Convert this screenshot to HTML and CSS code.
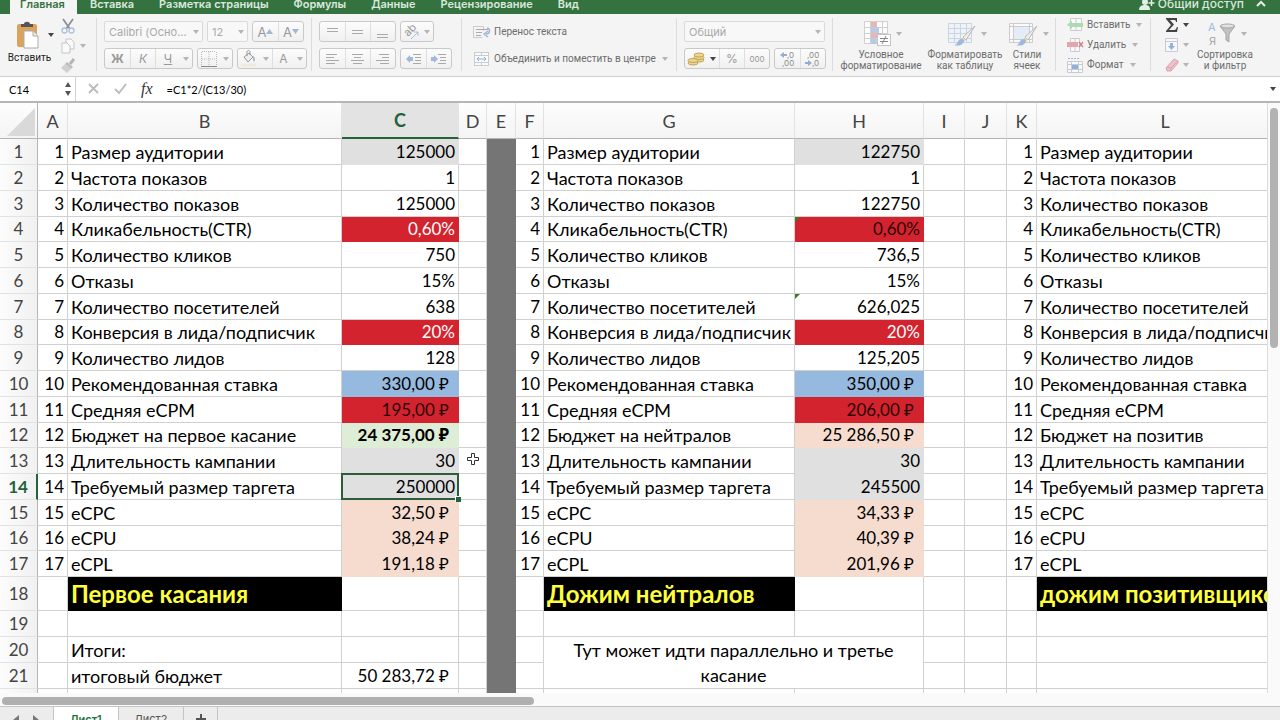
FILE: index.html
```html
<!DOCTYPE html>
<html lang="ru">
<head>
<meta charset="utf-8">
<title>Лист1</title>
<link rel="stylesheet" href="styles.css">
</head>
<body>
<nav class="tabs">
  <button class="tab tab-on">Главная</button>
  <button class="tab">Вставка</button>
  <button class="tab">Разметка страницы</button>
  <button class="tab">Формулы</button>
  <button class="tab">Данные</button>
  <button class="tab">Рецензирование</button>
  <button class="tab">Вид</button>
  <button class="tab share"><svg width="16" height="12" viewBox="0 0 16 12"><circle cx="6" cy="4" r="3" fill="#e3efe5"/><path d="M0 12c0-4 3-5 6-5s5 1 5 5z" fill="#e3efe5"/><path d="M12.500 2v6M9.500 5h6" stroke="#e3efe5" stroke-width="1.500"/></svg>Общий доступ</button>
  <button class="tab fold" aria-label="Свернуть"><svg width="10" height="12" viewBox="0 0 10 12"><path d="M1 8l4-4 4 4" fill="none" stroke="#e3efe5" stroke-width="2"/></svg></button>
</nav>

<div class="ribbon">
  <div class="group g-clip">
    <button class="big paste">
      <span class="pic"><svg width="24" height="28" viewBox="0 0 24 28"><rect x="1" y="3" width="20" height="23" rx="2" fill="#d9a35b"/><path d="M5 6V3h3c0-3 6-3 6 0h3v3z" fill="#555"/><path d="M8 10h9l5 5v12H8z" fill="#fff" stroke="#aaa"/><path d="M17 10v5h5" fill="#eee" stroke="#aaa"/></svg><i class="arrow dark"></i></span>
      <span class="dark-label">Вставить</span>
    </button>
    <div class="small-col">
      <button aria-label="Вырезать"><svg width="14" height="16" viewBox="0 0 14 16"><path d="M2 1l7 10M12 1L5 11" stroke="#8d9096" stroke-width="1.800"/><circle cx="3.500" cy="12.500" r="2.500" fill="none" stroke="#a9bfdc" stroke-width="1.300"/><circle cx="10.500" cy="12.500" r="2.500" fill="none" stroke="#a9bfdc" stroke-width="1.300"/></svg></button>
      <button aria-label="Копировать"><svg width="14" height="16" viewBox="0 0 14 16"><path d="M5 1h5l3 3v7H5z" fill="#fafafa" stroke="#c4c4c4"/><path d="M1 5h5l3 3v7H1z" fill="#fafafa" stroke="#c4c4c4"/></svg><i class="arrow"></i></button>
      <button aria-label="Формат по образцу"><svg width="15" height="15" viewBox="0 0 15 15"><path d="M13 1l-4 5" stroke="#b5b5b5" stroke-width="3"/><path d="M6 4l6 5-2 2-6-5z" fill="#b9bec5"/><path d="M4 6l6 5-4 4-6-5z" fill="#d0d0d0"/></svg></button>
    </div>
  </div>

  <div class="group g-font">
    <div class="line">
      <span class="pick w-font"><select aria-label="Шрифт" disabled><option>Calibri (Осно...</option></select><i class="arrow"></i></span>
      <span class="pick w-size"><select aria-label="Размер" disabled><option>12</option></select><i class="arrow"></i></span>
      <span class="set"><button class="b25 ltr">А<svg width="7" height="5"><path d="M0 5l3.500-5L7 5z" fill="#a3b7d2"/></svg></button><button class="b25 ltr">А<svg width="7" height="5"><path d="M0 0l3.500 5L7 0z" fill="#a3b7d2"/></svg></button></span>
    </div>
    <div class="line">
      <span class="set"><button class="b25"><b>Ж</b></button><button class="b25"><em>К</em></button><button class="b25"><u>Ч</u></button><button class="b12" aria-label="Подчеркивание"><i class="arrow"></i></button></span>
      <span class="set"><button class="b22" aria-label="Границы"><svg width="16" height="16" viewBox="0 0 16 16"><path d="M1 .5h14M.5 1v14M15.500 1v14M8 1v14M1 8h14" stroke="#b8b8b8" stroke-dasharray="1 1" fill="none"/><path d="M0 15.500h16" stroke="#888"/></svg></button><button class="b12" aria-label="Виды границ"><i class="arrow"></i></button></span>
      <span class="set"><button class="b22" aria-label="Заливка"><svg width="16" height="17" viewBox="0 0 16 17"><path d="M3 7l5-4 4 4-5 5z" fill="#eee" stroke="#9a9a9a"/><path d="M6 6V2c0-2 3-2 3 0v3" fill="none" stroke="#9a9a9a"/><path d="M12 6c3 2 2 5 1 6-1-1-1-3-1-6z" fill="#a3b7d2"/><path d="M0 15h15" stroke="#eeeadc" stroke-width="3"/></svg></button><button class="b12" aria-label="Цвет заливки"><i class="arrow"></i></button><button class="b22">A</button><button class="b12" aria-label="Цвет текста"><i class="arrow"></i></button></span>
    </div>
  </div>

  <div class="group g-align">
    <div class="line">
      <span class="set"><button class="b25" aria-label="По верхнему краю"><svg width="14" height="14"><path d="M1 3.500h11M1 6.500h11" stroke="#aaa"/></svg></button><button class="b25" aria-label="По середине"><svg width="14" height="14"><path d="M1 5.500h11M1 8.500h11" stroke="#aaa"/></svg></button><button class="b25" aria-label="По нижнему краю"><svg width="14" height="14"><path d="M1 9.500h11M1 12.500h11" stroke="#aaa"/></svg></button></span>
      <span class="set"><button class="b32" aria-label="Ориентация"><svg width="18" height="16" viewBox="0 0 18 16"><text x="0" y="0" font-size="11" fill="#999" transform="translate(4 13) rotate(-45)">ab</text><path d="M7 15l7-7M14 12V8h-4" fill="none" stroke="#a9bfdc"/></svg><i class="arrow"></i></button></span>
    </div>
    <div class="line">
      <span class="set"><button class="b25" aria-label="По левому краю"><svg width="14" height="12"><path d="M0 1.500h11M0 4.500h8M0 7.500h13M0 10.500h9" stroke="#aaa"/></svg></button><button class="b25" aria-label="По центру"><svg width="14" height="12"><path d="M1 1.500h11M3 4.500h7M0 7.500h13M2 10.500h9" stroke="#aaa"/></svg></button><button class="b25" aria-label="По правому краю"><svg width="14" height="12"><path d="M3 1.500h10M6 4.500h7M0 7.500h13M4 10.500h9" stroke="#aaa"/></svg></button></span>
      <span class="set"><button class="b25" aria-label="Уменьшить отступ"><svg width="16" height="12"><path d="M0 6l4-4v2h3v4H4v2z" fill="#a3b7d8"/><path d="M7 1.500h8M9 4.500h6M9 7.500h6M7 10.500h8" stroke="#aaa"/></svg></button><button class="b25" aria-label="Увеличить отступ"><svg width="16" height="12"><path d="M7 6L3 2v2H0v4h3v2z" fill="#a3b7d8"/><path d="M7 1.500h8M9 4.500h6M9 7.500h6M7 10.500h8" stroke="#aaa"/></svg></button></span>
    </div>
  </div>

  <div class="group g-wrap">
    <button class="flat h21"><svg width="18" height="14" viewBox="0 0 18 14"><path d="M.5 1.500h10M.5 12.500h9M.5 1v12M10.500 1v5" stroke="#ccc" fill="none"/><path d="M3 4.500h12M3 7.500h6M3 10.500h5" stroke="#aaa"/><path d="M14 3c4 1 3 6-1 6M15 6l-4 3 4 3" fill="none" stroke="#a3b7d8" stroke-width="1.500"/></svg>Перенос текста</button>
    <button class="flat h21"><svg width="18" height="16" viewBox="0 0 18 16"><rect x="1.500" y="1.500" width="14" height="13" fill="#f8fafc" stroke="#c9cdd2"/><path d="M8.500 1v3M8.500 12v3M1 4.500h15M1 11.500h15" stroke="#c9cdd2"/><path d="M4 8h9M6 6L4 8l2 2M11 6l2 2-2 2" fill="none" stroke="#94aed3"/></svg>Объединить и поместить в центре<i class="arrow"></i></button>
  </div>

  <div class="group g-num">
    <div class="line"><span class="pick w-fmt"><select aria-label="Числовой формат" disabled><option>Общий</option></select><i class="arrow"></i></span></div>
    <div class="line">
      <span class="set"><button class="b22" aria-label="Денежный формат"><svg width="18" height="15" viewBox="0 0 18 15"><g fill="#ecd592" stroke="#c2a457"><ellipse cx="12" cy="9" rx="5" ry="2"/><ellipse cx="12" cy="6.500" rx="5" ry="2"/><ellipse cx="12" cy="4" rx="5" ry="2"/><ellipse cx="6" cy="12" rx="5" ry="2"/><ellipse cx="6" cy="9.500" rx="5" ry="2"/></g></svg></button><button class="b12" aria-label="Валюты"><i class="arrow dark"></i></button><button class="b25">%</button><button class="b25 tho">000</button></span>
      <span class="set"><button class="b25" aria-label="Увеличить разрядность"><svg width="18" height="16" font-size="8" fill="#8a8a8a"><path d="M1 4l4-3v2h3v2H5v2z" fill="#94aed3"/><text x="8" y="7">,0</text><text x="3" y="15">,00</text></svg></button><button class="b25" aria-label="Уменьшить разрядность"><svg width="18" height="16" font-size="8" fill="#8a8a8a"><text x="3" y="7">,00</text><path d="M8 12L4 9v2H1v2h3v2z" fill="#94aed3"/><text x="8" y="15">,0</text></svg></button></span>
    </div>
  </div>

  <div class="group g-style">
    <button class="big w-cond"><span class="pic"><svg width="27" height="26" viewBox="0 0 27 26"><path d="M.5 .5h23v22H.5zM6.500 0v23M12.500 0v23M18.500 0v23M0 6.500h24M0 12.500h24M0 17.500h24" fill="#fdfdfd" stroke="#d0d0d0"/><path d="M7 1h6v5H7zM7 12h11v5H7z" fill="#eab5b5"/><path d="M7 6h8v6H7zM7 17h5v6H7z" fill="#b5cbe8"/><rect x="13.500" y="13.500" width="13" height="11" fill="#fff" stroke="#c4c4c4"/><path d="M16 17.500h8M16 20.500h8M22 15l-4 8" stroke="#888"/></svg><i class="arrow"></i></span><span>Условное<br>форматирование</span></button>
    <button class="big w-tbl"><span class="pic"><svg width="28" height="26" viewBox="0 0 28 26"><path d="M.5 2.500h23v19H.5zM6.500 2v20M12.500 2v20M18.500 2v20M0 7.500h24M0 12.500h24M0 17.500h24" fill="#eef3fa" stroke="#ccd4de"/><path d="M27 5L15 16l3 3z" fill="#eee" stroke="#b8b8b8"/><path d="M15 16l3 3-3 2-2-2z" fill="#ecd3a0"/><path d="M13 18c3 0 4 2 2 4-2 3-6 3-9 2 4 0 3-5 7-6z" fill="#9db9e0"/></svg><i class="arrow"></i></span><span>Форматировать<br>как таблицу</span></button>
    <button class="big w-cell"><span class="pic"><svg width="29" height="26" viewBox="0 0 29 26"><path d="M.5 2.500h23v19H.5zM4.500 2v20M20.500 2v20M0 5.500h24M0 18.500h24" fill="#fafafa" stroke="#ccc"/><rect x="5" y="6" width="15" height="12" fill="#e4ecf7"/><path d="M28 5L16 16l3 3z" fill="#eee" stroke="#b8b8b8"/><path d="M16 16l3 3-3 2-2-2z" fill="#ecd3a0"/><path d="M14 18c3 0 4 2 2 4-2 3-6 3-9 2 4 0 3-5 7-6z" fill="#9db9e0"/></svg><i class="arrow"></i></span><span>Стили<br>ячеек</span></button>
  </div>

  <div class="group g-cells">
    <button class="flat h20"><svg width="17" height="14" viewBox="0 0 17 14"><path d="M3.500 .5h11v12h-11zM9 0v13" fill="#fafafa" stroke="#ccc"/><path d="M0 6.500L5 3v2h11v4H5v2z" fill="#a9dcb0"/></svg>Вставить<i class="arrow"></i></button>
    <button class="flat h20"><svg width="17" height="14" viewBox="0 0 17 14"><path d="M3.500 .5h9v13h-9zM8 0v13" fill="#fafafa" stroke="#ccc"/><path d="M0 4h11v5H0z" fill="#e5a5ac"/><path d="M12 4l4 5M16 4l-4 5" stroke="#dc7f8a" stroke-width="1.500"/></svg>Удалить<i class="arrow"></i></button>
    <button class="flat h20"><svg width="17" height="16" viewBox="0 0 17 16"><path d="M1 1.500h11" stroke="#9db9e0" stroke-dasharray="2 1"/><path d="M.5 4.500h15v11H.5zM4.500 4v12M11.500 4v12M0 7.500h16M0 12.500h16" fill="#fafafa" stroke="#c8ccd2"/><path d="M5 8h6v4H5z" fill="#8fb0dc"/></svg>Формат<i class="arrow"></i></button>
  </div>

  <div class="group g-edit">
    <div class="edit-col">
      <button class="flat h20" aria-label="Сумма"><svg width="14" height="16" viewBox="0 0 14 16"><path d="M1 1h11v4h-1c0-2-1-2-3-2H5l4 4.500L4 13h5c2 0 2-1 3-3h1l-1 5H1v-1l5-6L1 2z" fill="#444"/></svg><i class="arrow dark"></i></button>
      <button class="flat h20" aria-label="Заполнить"><svg width="14" height="14" viewBox="0 0 14 14"><path d="M.5 .5h12v13H.5zM0 3.500h13" fill="#f6f8fb" stroke="#c8ccd2"/><path d="M5 5h3v3h2l-3.500 4L3 8h2z" fill="#94b2dc"/></svg><i class="arrow"></i></button>
      <button class="flat h20" aria-label="Очистить"><svg width="14" height="14" viewBox="0 0 14 14"><path d="M9 1l4 2v2l-7 8H2l-1-3z" fill="#efc0ca" stroke="#d9a5b2"/><path d="M2 9l4 1v3M6 10l7-7" fill="none" stroke="#d9a5b2"/></svg><i class="arrow"></i></button>
    </div>
    <button class="big w-sort"><span class="pic"><svg width="28" height="26" viewBox="0 0 28 26"><text x="0" y="10" font-size="11" fill="#9db9e0">А</text><text x="1" y="24" font-size="11" fill="#aaa">Я</text><path d="M12 5h15l-6 8v8l-3-2v-6z" fill="#c2c2c2" stroke="#a5a5a5"/><ellipse cx="19.500" cy="5" rx="7" ry="2" fill="#e2e2e2" stroke="#a5a5a5"/></svg><i class="arrow"></i></span><span>Сортировка<br>и фильтр</span></button>
  </div>
</div>

<div class="formula">
  <input class="name-box" aria-label="Имя ячейки" value="C14">
  <svg class="step" width="8" height="16" viewBox="0 0 8 16"><path d="M1 6l3-5 3 5zM1 10l3 5 3-5z" fill="#555"/></svg>
  <div class="f-main">
    <button aria-label="Отмена"><svg width="12" height="12"><path d="M1 1l9 9M10 1l-9 9" stroke="#bdbdbd" stroke-width="2"/></svg></button>
    <button aria-label="Ввод"><svg width="13" height="12"><path d="M1 6l4 4 7-9" fill="none" stroke="#bdbdbd" stroke-width="2"/></svg></button>
    <button class="fx">fx</button>
    <input class="f-text" aria-label="Формула" value="=C1*2/(C13/30)">
    <i class="arrow dark"></i>
  </div>
</div>

<div class="sheet">
<div class="cells">
<table class="grid">
<colgroup><col class="c-n"><col class="c-a"><col class="c-b"><col class="c-c"><col class="c-d"><col class="c-e"><col class="c-f"><col class="c-g"><col class="c-h"><col class="c-i"><col class="c-j"><col class="c-k"><col></colgroup>
<thead><tr><th class="corner"><svg width="30" height="30"><path d="M29 1v28H1z" fill="#d9d9d9"/></svg></th><th>A</th><th>B</th><th class="on">C</th><th>D</th><th>E</th><th>F</th><th>G</th><th>H</th><th>I</th><th>J</th><th>K</th><th>L</th></tr></thead>
<tbody>
<tr><th>1</th><td class="r">1</td><td>Размер аудитории</td><td class="r gray">125000</td><td></td><td class="bar"></td><td class="r">1</td><td>Размер аудитории</td><td class="r gray">122750</td><td></td><td></td><td class="r">1</td><td>Размер аудитории</td></tr>
<tr><th>2</th><td class="r">2</td><td>Частота показов</td><td class="r">1</td><td></td><td class="bar"></td><td class="r">2</td><td>Частота показов</td><td class="r">1</td><td></td><td></td><td class="r">2</td><td>Частота показов</td></tr>
<tr><th>3</th><td class="r">3</td><td>Количество показов</td><td class="r">125000</td><td></td><td class="bar"></td><td class="r">3</td><td>Количество показов</td><td class="r">122750</td><td></td><td></td><td class="r">3</td><td>Количество показов</td></tr>
<tr class="low"><th>4</th><td class="r">4</td><td>Кликабельность(CTR)</td><td class="r red white">0,60%</td><td></td><td class="bar"></td><td class="r">4</td><td>Кликабельность(CTR)</td><td class="r red mark">0,60%</td><td></td><td></td><td class="r">4</td><td>Кликабельность(CTR)</td></tr>
<tr><th>5</th><td class="r">5</td><td>Количество кликов</td><td class="r">750</td><td></td><td class="bar"></td><td class="r">5</td><td>Количество кликов</td><td class="r">736,5</td><td></td><td></td><td class="r">5</td><td>Количество кликов</td></tr>
<tr><th>6</th><td class="r">6</td><td>Отказы</td><td class="r">15%</td><td></td><td class="bar"></td><td class="r">6</td><td>Отказы</td><td class="r">15%</td><td></td><td></td><td class="r">6</td><td>Отказы</td></tr>
<tr><th>7</th><td class="r">7</td><td>Количество посетителей</td><td class="r">638</td><td></td><td class="bar"></td><td class="r">7</td><td>Количество посетителей</td><td class="r mark">626,025</td><td></td><td></td><td class="r">7</td><td>Количество посетителей</td></tr>
<tr class="low"><th>8</th><td class="r">8</td><td>Конверсия в лида/подписчик</td><td class="r red white">20%</td><td></td><td class="bar"></td><td class="r">8</td><td>Конверсия в лида/подписчик</td><td class="r red white">20%</td><td></td><td></td><td class="r">8</td><td>Конверсия в лида/подписчик</td></tr>
<tr><th>9</th><td class="r">9</td><td>Количество лидов</td><td class="r">128</td><td></td><td class="bar"></td><td class="r">9</td><td>Количество лидов</td><td class="r">125,205</td><td></td><td></td><td class="r">9</td><td>Количество лидов</td></tr>
<tr><th>10</th><td class="r">10</td><td>Рекомендованная ставка</td><td class="r blue rub">330,00 ₽</td><td></td><td class="bar"></td><td class="r">10</td><td>Рекомендованная ставка</td><td class="r blue rub">350,00 ₽</td><td></td><td></td><td class="r">10</td><td>Рекомендованная ставка</td></tr>
<tr><th>11</th><td class="r">11</td><td>Средняя eCPM</td><td class="r red rub">195,00 ₽</td><td></td><td class="bar"></td><td class="r">11</td><td>Средняя eCPM</td><td class="r red rub">206,00 ₽</td><td></td><td></td><td class="r">11</td><td>Средняя eCPM</td></tr>
<tr class="low"><th>12</th><td class="r">12</td><td>Бюджет на первое касание</td><td class="r green rub"><b>24 375,00 ₽</b></td><td></td><td class="bar"></td><td class="r">12</td><td>Бюджет на нейтралов</td><td class="r peach rub">25 286,50 ₽</td><td></td><td></td><td class="r">12</td><td>Бюджет на позитив</td></tr>
<tr><th>13</th><td class="r">13</td><td>Длительность кампании</td><td class="r gray">30</td><td class="has-cursor"><svg class="cursor" width="14" height="14" viewBox="0 0 14 14"><path d="M5.500 1.500h3v4h4v3h-4v4h-3v-4h-4v-3h4z" fill="#fff" stroke="#333"/></svg></td><td class="bar"></td><td class="r">13</td><td>Длительность кампании</td><td class="r gray">30</td><td></td><td></td><td class="r">13</td><td>Длительность кампании</td></tr>
<tr><th class="on">14</th><td class="r">14</td><td>Требуемый размер таргета</td><td class="r gray selected">250000</td><td></td><td class="bar"></td><td class="r">14</td><td>Требуемый размер таргета</td><td class="r gray">245500</td><td></td><td></td><td class="r">14</td><td>Требуемый размер таргета</td></tr>
<tr><th>15</th><td class="r">15</td><td>eCPC</td><td class="r peach rub">32,50 ₽</td><td></td><td class="bar"></td><td class="r">15</td><td>eCPC</td><td class="r peach rub">34,33 ₽</td><td></td><td></td><td class="r">15</td><td>eCPC</td></tr>
<tr class="low"><th>16</th><td class="r">16</td><td>eCPU</td><td class="r peach rub">38,24 ₽</td><td></td><td class="bar"></td><td class="r">16</td><td>eCPU</td><td class="r peach rub">40,39 ₽</td><td></td><td></td><td class="r">16</td><td>eCPU</td></tr>
<tr><th>17</th><td class="r">17</td><td>eCPL</td><td class="r peach rub">191,18 ₽</td><td></td><td class="bar"></td><td class="r">17</td><td>eCPL</td><td class="r peach rub">201,96 ₽</td><td></td><td></td><td class="r">17</td><td>eCPL</td></tr>
<tr class="tall"><th>18</th><td></td><td class="title">Первое касания</td><td></td><td></td><td class="bar"></td><td></td><td class="title">Дожим нейтралов</td><td></td><td></td><td></td><td></td><td class="title">дожим позитивщиков</td></tr>
<tr><th>19</th><td></td><td></td><td></td><td></td><td class="bar"></td><td></td><td></td><td></td><td></td><td></td><td></td><td></td></tr>
<tr><th>20</th><td></td><td>Итоги:</td><td></td><td></td><td class="bar"></td><td></td><td class="merged" colspan="2" rowspan="2">Тут может идти параллельно и третье касание</td><td></td><td></td><td></td><td></td></tr>
<tr><th>21</th><td></td><td>итоговый бюджет</td><td class="r rub">50 283,72 ₽</td><td></td><td class="bar"></td><td></td><td></td><td></td><td></td><td></td></tr>
<tr><th></th><td></td><td></td><td></td><td></td><td class="bar"></td><td></td><td></td><td></td><td></td><td></td><td></td><td></td></tr>
</tbody>
</table>
</div>
<div class="v-track"><div class="v-thumb"></div></div>
</div>

<div class="h-track"><div class="h-thumb"></div></div>
<div class="book">
  <div class="book-nav"><svg width="30" height="12"><path d="M8 1v10L2 6zM22 1v10l6-5z" fill="#777"/></svg></div>
  <button class="leaf leaf-on">Лист1</button>
  <button class="leaf">Лист2</button>
  <button class="leaf add" aria-label="Добавить лист"><svg width="10" height="10"><path d="M5 0v10M0 5h10" stroke="#555" stroke-width="2"/></svg></button>
</div>
</body>
</html>
```

FILE: styles.css
```css
* { box-sizing: border-box; }
html, body { height: 100%; }
body {
  margin: 0;
  display: flex;
  flex-direction: column;
  overflow: hidden;
  background: #fff;
  color: #000;
  font-family: Inter, "Noto Sans", sans-serif;
  font-size: 10px;
}
button, input, select { font: inherit; color: inherit; margin: 0; }
button { background: none; border: 0; padding: 0; }
svg { flex: none; display: block; }
svg text { font-family: Inter, "Noto Sans", sans-serif; }

/* ribbon tabs */
.tabs {
  flex: none;
  height: 14px;
  display: flex;
  align-items: flex-end;
  overflow: hidden;
  background: #34733f;
  padding: 0 14px 0 10px;
}
.tab {
  height: 20px;
  line-height: 20px;
  padding: 0 12px 0 10px;
  margin-right: 3px;
  font-size: 11px;
  font-weight: 600;
  color: #d9e8dc;
  white-space: nowrap;
}
.tab-on { background: #f4f4f4; color: #34733f; }
.share { margin-left: auto; display: flex; align-items: center; gap: 3px; padding: 0; margin-right: 12px; font-size: 12px; font-weight: 500; }
.fold { padding: 0; margin: 0; }

/* ribbon */
.ribbon {
  flex: none;
  display: flex;
  align-items: stretch;
  background: #f4f4f4;
  border-bottom: 1px solid #cfcfcf;
  padding: 4px 0 5px;
  height: 63px;
  color: #6c6c6c;
}
.group {
  flex: none;
  display: flex;
  flex-direction: column;
  gap: 6px;
  padding: 3px 7px 0;
  border-right: 1px solid #dcdcdc;
}
.g-clip { flex-direction: row; width: 97px; padding: 0 0 0 8px; gap: 10px; }
.g-font { width: 215px; }
.g-align { width: 150px; }
.g-wrap { width: 215px; padding-left: 11px; }
.g-num { width: 156px; }
.g-style { flex-direction: row; width: 223px; gap: 4px; padding: 0 0 0 8px; }
.g-cells { width: 95px; padding: 0 0 0 11px; gap: 0; justify-content: center; }
.g-edit { flex-direction: row; gap: 5px; padding: 0 0 0 14px; border: 0; }
.edit-col { display: flex; flex-direction: column; justify-content: center; }
.line { display: flex; gap: 4px; height: 21px; }

.arrow {
  flex: none;
  width: 0;
  height: 0;
  border: 3px solid transparent;
  border-top: 4px solid #b5b5b5;
  border-bottom: 0;
}
.dark { border-top-color: #444; }

.big, .flat { font-family: Roboto, "Noto Sans", sans-serif; font-size: 10.5px; }
.big, .flat { font-size: 10px; letter-spacing: normal; }
.big { display: flex; flex-direction: column; align-items: center; line-height: 11px; white-space: nowrap; }
.pic { display: flex; align-items: center; gap: 5px; height: 36px; }
.big .pic { padding-left: 4px; }
.paste { width: 43px; }
.big.paste .pic { gap: 8px; height: 34px; padding-left: 10px; }
.dark-label { color: #222; line-height: 12px; }
.w-cond { width: 80px; }
.w-tbl { width: 80px; }
.w-cell { width: 36px; }
.w-sort { width: 62px; }
.small-col { display: flex; flex-direction: column; gap: 4px; }
.small-col button { display: flex; align-items: center; gap: 5px; height: 16px; }

.pick { position: relative; display: block; height: 21px; }
.pick select {
  appearance: none;
  width: 100%;
  height: 100%;
  padding: 0 0 0 4px;
  border: 1px solid #dadada;
  border-radius: 2px;
  background: #f8f8f8;
  color: #a9a9a9;
  opacity: 1;
  font-size: 11px;
}
.pick .arrow { position: absolute; right: 4px; top: 9px; }
.w-font { width: 99px; }
.w-size { width: 41px; }
.w-fmt { width: 141px; }

.set {
  flex: none;
  display: flex;
  height: 21px;
  border: 1px solid #c9c9c9;
  border-radius: 3px;
  background: linear-gradient(#fcfcfc, #f0f0f0);
  color: #999;
  font-size: 12px;
}
.set button { display: flex; align-items: center; justify-content: center; border-left: 1px solid #dedede; }
.set button:first-child, .set .b12 { border-left: 0; }
.b25 { width: 25px; }
.b22 { width: 22px; }
.b12 { width: 12px; }
.b32 { width: 32px; gap: 2px; }
.ltr { font-size: 13px; }
.tho { font-size: 8px; }

.flat { flex: none; display: flex; align-items: center; gap: 3px; white-space: nowrap; }
.flat .arrow { margin-left: 3px; }
.edit-col .flat .arrow { margin-left: 1px; }
.h21 { height: 21px; }
.h20 { height: 20px; }

/* formula bar */
.formula {
  flex: none;
  display: flex;
  align-items: center;
  height: 26px;
  border-bottom: 2px solid #b5b5b5;
  font-family: Lato, "Noto Sans", sans-serif;
  font-size: 11px;
  background: #fff;
}
.formula input { border: 0; outline: 0; background: none; padding: 0; }
.name-box { width: 64px; text-indent: 9px; }
.f-main { flex: 1; display: flex; align-items: center; align-self: stretch; border-left: 1px solid #d0d0d0; margin-left: 3px; padding: 0 4px 0 12px; gap: 14px; }
.fx { font-family: "Liberation Serif", serif; font-style: italic; font-size: 16px; color: #333; }
.f-text { flex: 1; }

/* worksheet */
.sheet { flex: 1; min-height: 0; display: flex; }
.cells { flex: 1; min-width: 0; overflow: hidden; }
.grid {
  width: calc(100% + 27px);
  table-layout: fixed;
  border-collapse: separate;
  border-spacing: 0;
  font-family: Lato, "Noto Sans", sans-serif;
  font-size: 18px;
}
.c-n { width: 38px; }
.c-a { width: 30px; }
.c-b { width: 274px; }
.c-c { width: 117px; }
.c-d { width: 28px; }
.c-e { width: 29px; }
.c-f { width: 28px; }
.c-g { width: 251px; }
.c-h { width: 129px; }
.c-i { width: 41px; }
.c-j { width: 42px; }
.c-k { width: 30px; }
.grid tr { height: 26px; }
.grid .low { height: 25px; }
.grid .tall { height: 34px; }
.grid thead tr { height: 36px; }
.grid th, .grid td {
  padding: 0 3px;
  line-height: 22px;
  white-space: nowrap;
  overflow: hidden;
  border-right: 1px solid #d0d0d0;
  border-bottom: 1px solid #d0d0d0;
}
.grid th { font-size: 17px; font-weight: 400; color: #444; background: linear-gradient(90deg, #fcfcfc, #f1f1f1); padding: 0; }
.grid thead th { font-size: 18px; background: linear-gradient(#fdfdfd, #f4f4f4); border-right-color: #e2e2e2; border-bottom-color: #b5b5b5; }
.grid tbody th { border-bottom-color: #e2e2e2; border-right-color: #b5b5b5; }
.grid th.on { color: #22633a; font-weight: 700; }
.grid thead th.on { background: #e3e3e3; border-bottom: 2px solid #22633a; }
.grid tbody th.on { border-right: 2px solid #22633a; }
.grid .corner { border-right-color: #b5b5b5; }
.corner svg { margin: 2px 0 0 6px; }
.grid .r { text-align: right; font-size: 17px; }
.grid .rub { padding-right: 9px; }
.grid .gray { background: #e0e0e0; border-color: #e0e0e0; }
.grid .red { background: #d3232e; border-color: #d3232e; color: #2a0505; }
.grid .white { color: #fff; }
.grid .blue { background: #95b9df; border-color: #95b9df; }
.grid .green { background: #deedd5; border-color: #deedd5; }
.grid .peach { background: #f5dccf; border-color: #f5dccf; }
.grid .bar { background: #757575; border-color: #757575; }
.grid .title { background: #000; border-color: #000; color: #ffff3c; font-size: 24px; font-weight: 700; line-height: 30px; }
.grid .merged { white-space: normal; text-align: center; line-height: 25px; padding: 0 20px; }
.mark { position: relative; }
.mark::before { content: ""; position: absolute; left: 0; top: 0; border-top: 5px solid #3c7d22; border-right: 5px solid transparent; }
.grid .selected { position: relative; overflow: visible; }
.selected::before { content: ""; position: absolute; inset: -1px; border: 2px solid #2d5c3b; }
.selected::after { content: ""; position: absolute; right: -3px; bottom: -3px; width: 5px; height: 5px; background: #22633a; border: 1px solid #fff; border-width: 1px 0 0 1px; }
.has-cursor { position: relative; }
.cursor { position: absolute; left: 7px; top: 4px; }

/* scroll bars */
.v-track { flex: none; width: 13px; background: #fafafa; border-left: 1px solid #dcdcdc; padding: 5px 2px 0; }
.v-thumb { height: 41%; border-radius: 4px; background: #b2b2b2; }
.h-track { flex: none; height: 13px; padding: 4px 2px 1px; background: #fafafa; }
.h-thumb { width: calc(100% * 5 / 12); height: 8px; border-radius: 4px; background: #b0b0b0; }

/* sheet tabs */
.book { flex: none; height: 14px; overflow: hidden; display: flex; align-items: flex-start; background: #ececec; border-top: 1px solid #c4c4c4; }
.book-nav { width: 54px; height: 24px; padding: 7px 0 0 11px; border-right: 1px solid #c4c4c4; }
.leaf { height: 24px; width: 65px; display: flex; align-items: center; justify-content: center; border-right: 1px solid #c4c4c4; color: #555; font-size: 11px; }
.leaf-on { background: #fff; color: #22733f; font-weight: 600; }
.add { width: 34px; }
```
